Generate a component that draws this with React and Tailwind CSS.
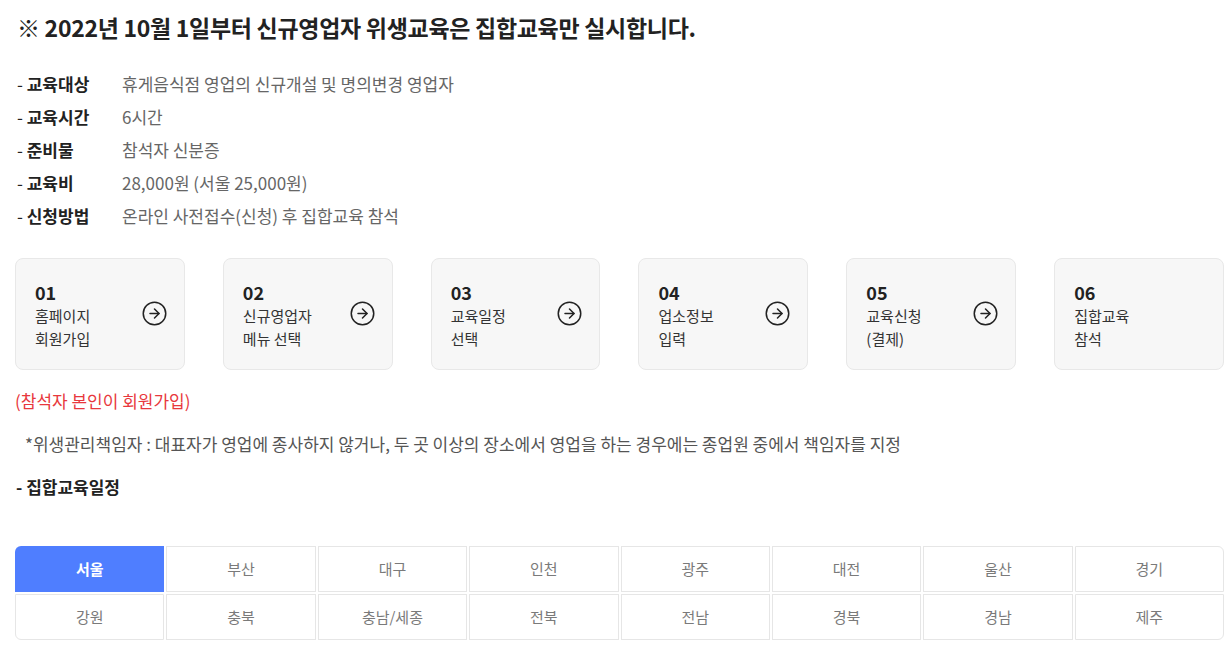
import { CircleArrowRight } from "lucide-react";

const info = [
  ["교육대상", "휴게음식점 영업의 신규개설 및 명의변경 영업자"],
  ["교육시간", "6시간"],
  ["준비물", "참석자 신분증"],
  ["교육비", "28,000원 (서울 25,000원)"],
  ["신청방법", "온라인 사전접수(신청) 후 집합교육 참석"],
];

const steps = [
  ["01", "홈페이지", "회원가입"],
  ["02", "신규영업자", "메뉴 선택"],
  ["03", "교육일정", "선택"],
  ["04", "업소정보", "입력"],
  ["05", "교육신청", "(결제)"],
  ["06", "집합교육", "참석"],
];

const regions = [
  "서울", "부산", "대구", "인천", "광주", "대전", "울산", "경기",
  "강원", "충북", "충남/세종", "전북", "전남", "경북", "경남", "제주",
];

const corner = {
  0: "rounded-tl-md",
  7: "rounded-tr-md",
  8: "rounded-bl-md",
  15: "rounded-br-md",
};

export default function App() {
  return (
    <div className="w-[1232px] min-h-[652px] bg-white font-['Noto_Sans_CJK_KR','Noto_Sans',sans-serif] text-[#222]">
      <div className="ml-[15px] w-[1209px] pt-[10px]">
        <h1 className="text-[23px] font-bold leading-[34px] pl-[2px] tracking-[-0.3px]">
          ※ 2022년 10월 1일부터 신규영업자 위생교육은 집합교육만 실시합니다.
        </h1>

        {/* 교육 안내 */}
        <ul className="mt-[28px] flex flex-col gap-[9px] pl-[2px]">
          {info.map(([label, value]) => (
            <li key={label} className="flex text-[17px] leading-[24px]">
              <span className="w-[105px] shrink-0">
                - <span className="font-bold">{label}</span>
              </span>
              <span className="text-[#666]">{value}</span>
            </li>
          ))}
        </ul>

        {/* 신청 절차 */}
        <div className="mt-[30px] flex gap-[38px]">
          {steps.map(([no, l1, l2], i) => (
            <div
              key={no}
              className="flex h-[112px] w-[170px] items-center justify-between rounded-lg border border-[#e8e8e8] bg-[#f7f7f7] pl-[19px] pr-[16px]"
            >
              <div className="flex flex-col pt-[2px]">
                <span className="text-[18px] font-bold leading-[24px]">{no}</span>
                <span className="text-[15px] leading-[23px] text-[#333]">{l1}</span>
                <span className="text-[15px] leading-[23px] text-[#333]">{l2}</span>
              </div>
              {i < steps.length - 1 && (
                <CircleArrowRight size={27} strokeWidth={1.35} className="text-[#222] -mt-[1px]" />
              )}
            </div>
          ))}
        </div>

        <p className="mt-[19px] text-[17px] leading-[24px] text-[#e8383d]">(참석자 본인이 회원가입)</p>
        <p className="mt-[19px] pl-[10px] text-[17px] leading-[24px] text-[#555]">
          *위생관리책임자 : 대표자가 영업에 종사하지 않거나, 두 곳 이상의 장소에서 영업을 하는 경우에는 종업원 중에서 책임자를 지정
        </p>
        <p className="mt-[19px] pl-[1px] text-[17px] font-bold leading-[24px]">- 집합교육일정</p>

        {/* 지역 탭 */}
        <div className="mt-[47px] grid grid-cols-8 gap-[2px]">
          {regions.map((r, i) => (
            <div
              key={r}
              className={
                "flex h-[46px] items-center justify-center text-[15px] " +
                (corner[i] || "") +
                (i === 0
                  ? " bg-[#4f7eff] font-bold text-white"
                  : " border border-[#e6e6e6] bg-white text-[#7a7a7a]")
              }
            >
              {r}
            </div>
          ))}
        </div>
      </div>
    </div>
  );
}
